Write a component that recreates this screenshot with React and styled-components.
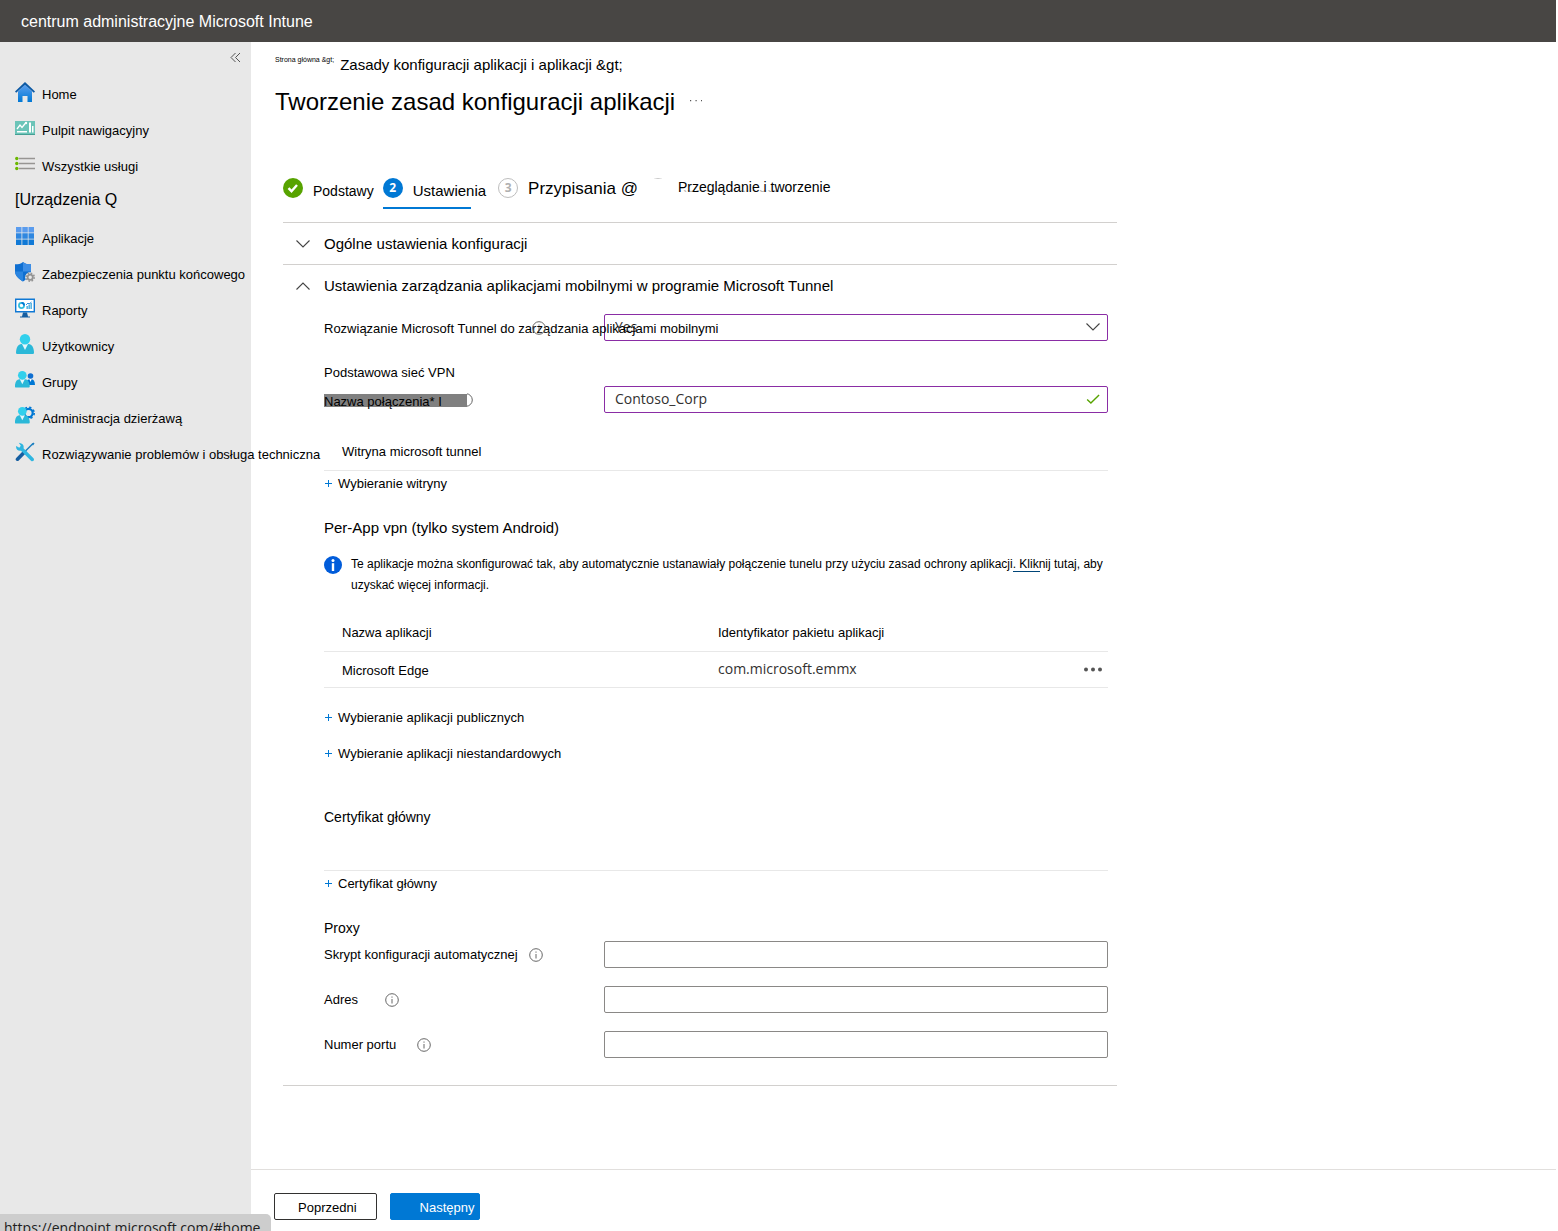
import styled, { createGlobalStyle } from 'styled-components';
import { useState } from 'react';

const GlobalStyle = createGlobalStyle`
  *,
  *::before,
  *::after {
    box-sizing: border-box;
  }

  body {
    margin: 0;
    background: #fff;
    color: #000;
    font-family: 'Liberation Sans', Arial, sans-serif;
    font-size: 13px;
    line-height: 18px;
  }

  button,
  input,
  select {
    font: inherit;
    color: inherit;
  }

  svg {
    flex: none;
  }
`;

const Page = styled.div`
  display: flex;
  flex-direction: column;
  min-height: 100vh;
`;

const TopBar = styled.header`
  height: 42px;
  margin-right: 2px;
  padding: 0 21px;
  background: #484644;
  color: #fff;
  font-size: 16px;
  line-height: 43px;
`;

const Body = styled.div`
  display: flex;
  flex: 1;
`;

const Sidebar = styled.nav`
  position: relative;
  z-index: 1;
  flex: 0 0 251px;
  min-width: 0;
  background: #e8e8e8;
`;

const CollapseRow = styled.div`
  display: flex;
  justify-content: flex-end;
  height: 34px;
  padding: 10px 10px 0;
`;

const IconButton = styled.button`
  display: flex;
  padding: 0;
  border: 0;
  background: none;
  cursor: pointer;
`;

const NavList = styled.ul`
  margin: 0;
  padding: 0;
  list-style: none;
`;

const NavLink = styled.a`
  display: flex;
  align-items: center;
  gap: 7px;
  height: 36px;
  padding: 2px 0 0 15px;
  color: #000;
  text-decoration: none;
  white-space: nowrap;

  svg {
    margin-bottom: 6px;
  }
`;

const NavHeading = styled(NavLink)`
  padding-top: 0;
  padding-bottom: 5px;
  font-size: 16px;
`;

const Main = styled.main`
  display: flex;
  flex: 1;
  flex-direction: column;
  min-width: 0;
`;

const Heading = styled.div`
  padding: 12px 24px 0;
`;

const Breadcrumb = styled.div`
  display: flex;
  gap: 6px;
  font-size: 15px;
  line-height: 22px;

  a {
    color: #000;
    text-decoration: none;
  }
`;

const SmallCrumb = styled.a`
  font-size: 7px;
  line-height: 12px;
`;

const TitleRow = styled.div`
  display: flex;
  align-items: center;
  gap: 15px;
  margin-top: 12px;

  svg {
    margin-bottom: 4px;
  }
`;

const Title = styled.h1`
  margin: 0;
  font-size: 24px;
  font-weight: 400;
  line-height: 28px;
`;

const Content = styled.div`
  flex: 1;
  width: 100%;
  max-width: 866px;
  padding: 60px 0 83px 32px;
`;

const Steps = styled.ol`
  display: flex;
  height: 46px;
  margin: 0;
  padding: 0;
  list-style: none;
`;

const Step = styled.li`
  position: relative;
  display: flex;
  gap: 10px;
  height: 33px;
  margin-right: ${(props) => props.$after || 0}px;
  font-size: ${(props) => props.$size || 14}px;
  line-height: ${(props) => props.$line || 30}px;
  white-space: nowrap;
`;

const ActiveLine = styled.span`
  position: absolute;
  bottom: 0;
  left: 0;
  width: 88px;
  height: 2px;
  background: #0078d4;
`;

const StepMark = styled.span`
  display: flex;
  flex: none;
  align-items: center;
  justify-content: center;
  width: 20px;
  height: 20px;
  margin-top: 2px;
  border: ${(props) => (props.$outlined ? '1px solid #bdbdbd' : 0)};
  border-radius: 50%;
  background: ${(props) => props.$fill || 'transparent'};
  color: ${(props) => (props.$outlined ? '#b0b0b0' : '#fff')};
  font: 700 12px/18px 'Open Sans', sans-serif;
`;

const PendingMark = styled.span`
  width: 20px;
  height: 1px;
  margin-top: 2px;
  overflow: hidden;

  &::before {
    content: '';
    display: block;
    height: 20px;
    border: 1px solid #c8c8c8;
    border-radius: 50%;
  }
`;

/* only the lower edge of the faded caption shows under the label */
const FadedCaption = styled.span`
  position: relative;

  &::before {
    content: 'Review + create';
    position: absolute;
    top: 0;
    left: 0;
    color: #b8b8b8;
    font-family: 'Open Sans', sans-serif;
    clip-path: inset(14px 0 0 0);
  }
`;

const StepLabel = styled.span`
  position: relative;
`;

const AccordionHead = styled.button`
  display: flex;
  align-items: center;
  gap: 14px;
  width: 100%;
  height: 42px;
  padding: 1px 13px 0;
  border: 0;
  border-top: 1px solid #d2d0ce;
  background: none;
  font-size: 15px;
  text-align: left;
  cursor: pointer;
`;

const Panel = styled.div`
  padding: 8px 9px 27px 41px;
  border-bottom: 1px solid #d2d0ce;
`;

const FieldRow = styled.div`
  display: grid;
  grid-template-columns: 280px 1fr;
  align-items: center;
  height: 27px;
  margin-bottom: ${(props) => props.$after || 0}px;
`;

const LabelCell = styled.div`
  position: relative;
  z-index: 1;
  display: flex;
  align-items: center;
  gap: ${(props) => props.$gap || 0}px;
  padding-top: 1px;
  white-space: nowrap;
  pointer-events: none;
`;

const Label = styled.label`
  padding-top: 1px;
`;

const HintOver = styled.span`
  position: absolute;
  left: 208px;
  display: flex;
`;

const HalfHint = styled.span`
  display: flex;
  justify-content: flex-end;
  width: 6px;
  overflow: hidden;
`;

const Marked = styled.label`
  width: 143px;
  height: 13px;
  margin-top: 1px;
  background: #808080;
  line-height: 16px;
`;

const Control = styled.div`
  position: relative;
  display: flex;

  svg {
    position: absolute;
    top: 6px;
    right: 8px;
    pointer-events: none;
  }
`;

const controlStyle = `
  width: 100%;
  height: 27px;
  padding: 0 10px 2px;
  border-radius: 2px;
  background: #fff;
  color: #323130;
  font: 14px/20px 'Open Sans', sans-serif;
  outline: none;
`;

const Select = styled.select`
  ${controlStyle}
  appearance: none;
  border: 1px solid #8a2da5;
`;

const Input = styled.input`
  ${controlStyle}
  border: 1px solid ${(props) => (props.$changed ? '#8a2da5' : '#8a8886')};
`;

const SubHeading = styled.h2`
  margin: 0;
  font-size: ${(props) => props.$size || 14}px;
  font-weight: 400;
  line-height: 18px;
`;

const ListHead = styled.div`
  height: ${(props) => props.$height || 28}px;
  padding-left: 18px;
  border-bottom: 1px solid #e8e8e8;
`;

const AddButton = styled.button`
  display: flex;
  align-items: center;
  gap: 5px;
  height: ${(props) => props.$height || 26}px;
  padding: 0;
  border: 0;
  background: none;
  cursor: pointer;

  svg {
    margin-bottom: 1px;
  }
`;

const Section = styled.section`
  padding-top: ${(props) => props.$top}px;
`;

const InfoNote = styled.div`
  display: flex;
  gap: 9px;
  margin-top: 17px;
  font-size: 12px;
  line-height: 21px;

  svg {
    margin-top: 2px;
  }

  p {
    margin: 0;
  }
`;

const NoteLink = styled.a`
  position: relative;
  color: #000;
  text-decoration: none;

  &::after {
    content: '';
    position: absolute;
    bottom: -1px;
    left: -6px;
    width: 27px;
    height: 1px;
    background: #004578;
  }
`;

const AppsTable = styled.table`
  width: 100%;
  margin-top: 19px;
  border-collapse: collapse;
  table-layout: fixed;

  th,
  td {
    height: 36px;
    padding: 0;
    border-bottom: 1px solid #e8e8e8;
    font-weight: 400;
    text-align: left;
  }

  th:first-child,
  td:first-child {
    width: 394px;
    padding-left: 18px;
  }

  td:first-child {
    padding-top: 3px;
  }

  th:last-child,
  td:last-child {
    width: 25px;
  }
`;

const PackageId = styled.td`
  color: #323130;
  font: 14px/20px 'Open Sans', sans-serif;
`;

const Footer = styled.footer`
  display: flex;
  gap: 13px;
  padding: 23px 23px 11px;
  margin-right: 2px;
  border-top: 1px solid #e1dfdd;
`;

const Button = styled.button`
  height: 27px;
  padding: ${(props) => (props.$primary ? '2px 5px 0 29px' : '2px 19px 0 23px')};
  border: 1px solid ${(props) => (props.$primary ? '#0078d4' : '#323130')};
  border-radius: 2px;
  background: ${(props) => (props.$primary ? '#0078d4' : '#fff')};
  color: ${(props) => (props.$primary ? '#fff' : '#000')};
  cursor: pointer;
`;

const StatusBubble = styled.div`
  position: fixed;
  z-index: 2;
  bottom: 0;
  left: 0;
  height: 17px;
  padding: 0 11px 0 4px;
  overflow: hidden;
  border-radius: 0 5px 0 0;
  background: #cdcdcd;
  color: #202020;
  font: 14px/28px 'Open Sans', sans-serif;
`;

const HomeIcon = () => (
  <svg width="20" height="20" viewBox="0 0 20 20" aria-hidden="true">
    <defs>
      <linearGradient id="home" x1="0" y1="0" x2="0" y2="1">
        <stop offset="0" stopColor="#5ea0ef" />
        <stop offset="1" stopColor="#0078d4" />
      </linearGradient>
    </defs>
    <path d="M3 9.5 10 2.5l7 7V20h-4.5v-6h-5v6H3z" fill="url(#home)" />
    <path d="M10 0 0 9.4l1.2 1.3L10 2.7l8.8 8L20 9.4z" fill="#0c59a4" />
  </svg>
);

const DashboardIcon = () => (
  <svg width="20" height="20" viewBox="0 0 20 20" aria-hidden="true">
    <path d="M0 3h20v14H0z" fill="#6bc4b8" />
    <path d="M0 16h20v1H0z" fill="#459f94" />
    <path d="M2 13h10v1.500H2zM14 4.500h2v10h-2zM17 8h1.500v6.500H17z" fill="#fff" />
    <path d="m2 11 3-4 2 2.500 4-5" fill="none" stroke="#fff" strokeWidth="1.300" />
    <circle cx="11" cy="5" r="1.200" fill="#fff" />
  </svg>
);

const ListIcon = () => (
  <svg width="20" height="20" viewBox="0 0 20 20" aria-hidden="true">
    <path d="M4 4.500h16M4 9.500h16M4 14.500h16" stroke="#979593" strokeWidth="1.600" />
    <g fill="#6bb700">
      <circle cx="1.800" cy="4.500" r="1.700" />
      <circle cx="1.800" cy="9.500" r="1.700" />
      <circle cx="1.800" cy="14.500" r="1.700" />
    </g>
  </svg>
);

const AppsIcon = () => (
  <svg width="20" height="20" viewBox="0 0 20 20" aria-hidden="true">
    <path d="M1 1h5.500v5.500H1zM7.300 1h5.500v5.500H7.300zM13.500 1H19v5.500h-5.500z" fill="#5a9cee" />
    <path d="M1 7.300h5.500v5.500H1zM7.300 7.300h5.500v5.500H7.300zM13.500 7.300H19v5.500h-5.500z" fill="#2f87e0" />
    <path d="M1 13.500h5.500V19H1zM7.300 13.500h5.500V19H7.300zM13.500 13.500H19V19h-5.500z" fill="#1079d6" />
  </svg>
);

const ShieldIcon = () => (
  <svg width="20" height="20" viewBox="0 0 20 20" aria-hidden="true">
    <path d="M8 0c2.500 2 4.500 2.300 8 2.300v7c0 5-5 8.200-8 10.200-3-2-8-5.200-8-10.200v-7C3.500 2.300 5.500 2 8 0z" fill="#0f6fd1" />
    <path d="M8 0c2.500 2 4.500 2.300 8 2.300V9.500H8z" fill="#3d8ee6" />
    <path d="M0 9.500h8v10C5 17.500 0 14.300 0 9.500z" fill="#2b85e0" />
    <circle cx="15.200" cy="15.200" r="5" fill="#e8e8e8" />
    <circle cx="15.200" cy="15.200" r="2.600" fill="none" stroke="#949494" strokeWidth="1.800" />
    <circle cx="15.200" cy="15.200" r="4" fill="none" stroke="#949494" strokeWidth="1.600" strokeDasharray="1.600 1.540" />
  </svg>
);

const ReportsIcon = () => (
  <svg width="20" height="20" viewBox="0 0 20 20" aria-hidden="true">
    <path d="M.7 1.200h18.600v12.600H.7z" fill="#fff" stroke="#0f78d4" strokeWidth="1.400" />
    <path d="M8 14.500h4l1 4h2v1H5v-1h2z" fill="#155ea1" />
    <circle cx="6.500" cy="7.500" r="2.600" fill="none" stroke="#32bedd" strokeWidth="1.700" />
    <path d="M6.500 4.900a2.600 2.600 0 0 1 2.600 2.600" fill="none" stroke="#0078d4" strokeWidth="1.700" />
    <path d="M11.500 8h1.300v3h-1.300zM13.500 6.500h1.300V11h-1.300zM15.500 5h1.300v6h-1.300z" fill="#32a5dd" />
    <path d="m11 7 2-2 1 1 2.500-2" fill="none" stroke="#0078d4" strokeWidth=".8" />
  </svg>
);

const PersonShape = ({ fill = '#2bb8d8' }) => (
  <>
    <path d="M1 18.500C1.200 14 3 10 6.500 10h7c3.500 0 5.300 4 5.500 8.500 0 1-.7 1.500-1.500 1.500h-15C1.700 20 1 19.500 1 18.500z" fill={fill} />
    <path d="M7 10h6l-3 6z" fill="#e4f7fb" />
    <circle cx="10" cy="5.200" r="5.200" fill="#32d0ec" />
  </>
);

const UserIcon = () => (
  <svg width="20" height="20" viewBox="0 0 20 20" aria-hidden="true">
    <PersonShape />
  </svg>
);

const GroupIcon = () => (
  <svg width="20" height="20" viewBox="0 0 20 20" aria-hidden="true">
    <circle cx="15.500" cy="6" r="2.800" fill="#0f6fd1" />
    <path d="M11 15c0-4 1.500-6 4.500-6s4.500 2 4.500 6z" fill="#0078d4" />
    <path d="m14.300 9 1.200 3 1.200-3z" fill="#fff" />
    <g transform="translate(-1 1) scale(.83)">
      <PersonShape />
    </g>
  </svg>
);

const TenantIcon = () => (
  <svg width="20" height="20" viewBox="0 0 20 20" aria-hidden="true">
    <circle cx="13.500" cy="7" r="4.200" fill="none" stroke="#0078d4" strokeWidth="2.200" />
    <circle cx="13.500" cy="7" r="5.700" fill="none" stroke="#0078d4" strokeWidth="1.600" strokeDasharray="2.240 2.240" />
    <g transform="translate(-1 1) scale(.83)">
      <PersonShape />
    </g>
  </svg>
);

const ToolsIcon = () => (
  <svg width="20" height="20" viewBox="0 0 20 20" aria-hidden="true">
    <path d="M18 1.500 10.500 9" stroke="#1b7fc0" strokeWidth="1.500" />
    <path d="m18.500.5 1 1-1.500 2-1.300-1.200z" fill="#1b7fc0" />
    <path d="m9.500 10-7 7.200" stroke="#155ea1" strokeWidth="3.600" strokeLinecap="round" />
    <path d="M5.500 1.200 3.800.8l2 3-1.500 2L1.200 4C.5 7 3 9.500 6 8.700l10 10c1.800 1.500 4-.7 2.500-2.500l-10-10C9.200 3.500 7.800 1.500 5.500 1.200z" fill="#2fb6e0" />
  </svg>
);

const CollapseIcon = () => (
  <svg width="11" height="11" viewBox="0 0 11 11" fill="none" stroke="#555" aria-hidden="true">
    <path d="M5.500 1 1 5.500 5.500 10M10 1 5.500 5.500 10 10" />
  </svg>
);

const ChevronIcon = ({ up }) => (
  <svg width="14" height="14" viewBox="0 0 14 14" fill="none" stroke="#444" strokeWidth="1.100" aria-hidden="true">
    <path d={up ? 'M.5 10.500 7 4l6.500 6.500' : 'M.5 3.500 7 10l6.500-6.500'} />
  </svg>
);

const CheckIcon = ({ size = 12, color = '#fff', thick = 2.4 }) => (
  <svg width={size} height={size} viewBox="0 0 12 12" fill="none" stroke={color} strokeWidth={thick} aria-hidden="true">
    <path d={thick > 2 ? 'm1.500 6.200 3 3 5.500-6.200' : 'm1 6.500 3.200 3 7-7'} />
  </svg>
);

const HintIcon = () => (
  <svg width="14" height="14" viewBox="0 0 14 14" fill="none" stroke="#666" aria-hidden="true">
    <circle cx="7" cy="7" r="6.300" />
    <path d="M7 6v4.500M7 3.500v1.200" />
  </svg>
);

const InfoIcon = () => (
  <svg width="18" height="18" viewBox="0 0 18 18" aria-hidden="true">
    <circle cx="9" cy="9" r="9" fill="#015cda" />
    <path d="M7.800 7.200h2.400V15H7.800z" fill="#fff" />
    <circle cx="9" cy="4.500" r="1.500" fill="#fff" />
  </svg>
);

const PlusIcon = () => (
  <svg width="9" height="9" viewBox="0 0 9 9" stroke="#0078d4" aria-hidden="true">
    <path d="M4.500 1v7M1 4.500h7" />
  </svg>
);

const DotsIcon = ({ small }) => (
  <svg width={small ? 12 : 20} height="5" viewBox={small ? '0 0 12 5' : '0 0 20 5'} fill="#555" aria-hidden="true">
    {small ? (
      <path d="M0 2h1.200v1.200H0zM5.500 2h1.200v1.200H5.500zM11 2h1v1.200h-1z" />
    ) : (
      <>
        <circle cx="3" cy="2.500" r="2" />
        <circle cx="10" cy="2.500" r="2" />
        <circle cx="17" cy="2.500" r="2" />
      </>
    )}
  </svg>
);

const mainLinks = [
  { name: 'Home', icon: HomeIcon },
  { name: 'Pulpit nawigacyjny', icon: DashboardIcon },
  { name: 'Wszystkie usługi', icon: ListIcon },
];

const deviceLinks = [
  { name: 'Aplikacje', icon: AppsIcon },
  { name: 'Zabezpieczenia punktu końcowego', icon: ShieldIcon },
  { name: 'Raporty', icon: ReportsIcon },
  { name: 'Użytkownicy', icon: UserIcon },
  { name: 'Grupy', icon: GroupIcon },
  { name: 'Administracja dzierżawą', icon: TenantIcon },
  { name: 'Rozwiązywanie problemów i obsługa techniczna', icon: ToolsIcon },
];

const proxyFields = [
  { id: 'script', label: 'Skrypt konfiguracji automatycznej', gap: 11, after: 18 },
  { id: 'address', label: 'Adres', gap: 27, after: 18 },
  { id: 'port', label: 'Numer portu', gap: 21, after: 0 },
];

const NavItem = ({ item }) => {
  const Icon = item.icon;
  return (
    <li>
      <NavLink href="#home">
        <Icon />
        {item.name}
      </NavLink>
    </li>
  );
};

const Add = ({ children, height }) => (
  <AddButton type="button" $height={height}>
    <PlusIcon />
    {children}
  </AddButton>
);

const App = () => {
  const [connection, setConnection] = useState('Contoso_Corp');

  return (
    <Page>
      <GlobalStyle />
      <TopBar>centrum administracyjne Microsoft Intune</TopBar>
      <Body>
        <Sidebar>
          <CollapseRow>
            <IconButton type="button" aria-label="Zwiń menu">
              <CollapseIcon />
            </IconButton>
          </CollapseRow>
          <NavList>
            {mainLinks.map((item) => (
              <NavItem key={item.name} item={item} />
            ))}
            <li>
              <NavHeading href="#home">[Urządzenia Q</NavHeading>
            </li>
            {deviceLinks.map((item) => (
              <NavItem key={item.name} item={item} />
            ))}
          </NavList>
        </Sidebar>
        <Main>
          <Heading>
            <Breadcrumb>
              <SmallCrumb href="#home">Strona główna &amp;gt;</SmallCrumb>
              <a href="#apps">Zasady konfiguracji aplikacji i aplikacji &amp;gt;</a>
            </Breadcrumb>
            <TitleRow>
              <Title>Tworzenie zasad konfiguracji aplikacji</Title>
              <IconButton type="button" aria-label="Więcej">
                <DotsIcon small />
              </IconButton>
            </TitleRow>
          </Heading>
          <Content>
            <Steps>
              <Step $after={9}>
                <StepMark $fill="#57a300">
                  <CheckIcon />
                </StepMark>
                Podstawy
              </Step>
              <Step $after={12} $size={15}>
                <StepMark $fill="#0078d4">2</StepMark>
                Ustawienia
                <ActiveLine />
              </Step>
              <Step $after={10} $size={17} $line={26}>
                <StepMark $outlined>3</StepMark>
                Przypisania @
              </Step>
              <Step $size={14} $line={22}>
                <PendingMark />
                <FadedCaption>
                  <StepLabel>Przeglądanie i tworzenie</StepLabel>
                </FadedCaption>
              </Step>
            </Steps>
            <AccordionHead type="button" aria-expanded="false">
              <ChevronIcon />
              Ogólne ustawienia konfiguracji
            </AccordionHead>
            <AccordionHead type="button" aria-expanded="true">
              <ChevronIcon up />
              Ustawienia zarządzania aplikacjami mobilnymi w programie Microsoft Tunnel
            </AccordionHead>
            <Panel>
              <FieldRow $after={23}>
                <LabelCell>
                  <HintOver>
                    <HintIcon />
                  </HintOver>
                  <Label htmlFor="tunnel">Rozwiązanie Microsoft Tunnel do zarządzania aplikacjami mobilnymi</Label>
                </LabelCell>
                <Control>
                  <Select id="tunnel" defaultValue="Yes">
                    <option>Yes</option>
                    <option>No</option>
                  </Select>
                  <ChevronIcon />
                </Control>
              </FieldRow>
              <SubHeading $size={13}>Podstawowa sieć VPN</SubHeading>
              <Section $top={4}>
                <FieldRow $after={30}>
                  <LabelCell>
                    <Marked htmlFor="connection">Nazwa połączenia* I</Marked>
                    <HalfHint>
                      <HintIcon />
                    </HalfHint>
                  </LabelCell>
                  <Control>
                    <Input
                      id="connection"
                      $changed
                      value={connection}
                      onChange={(event) => setConnection(event.target.value)}
                    />
                    <CheckIcon size={14} color="#57a300" thick={1.2} />
                  </Control>
                </FieldRow>
              </Section>
              <ListHead>Witryna microsoft tunnel</ListHead>
              <Add>Wybieranie witryny</Add>
              <Section $top={22}>
                <SubHeading $size={15}>Per-App vpn (tylko system Android)</SubHeading>
                <InfoNote>
                  <InfoIcon />
                  <p>
                    Te aplikacje można skonfigurować tak, aby automatycznie ustanawiały połączenie tunelu przy użyciu
                    zasad ochrony aplikacji. <NoteLink href="#more">Kliknij tutaj</NoteLink>, aby uzyskać więcej
                    informacji.
                  </p>
                </InfoNote>
                <AppsTable>
                  <thead>
                    <tr>
                      <th>Nazwa aplikacji</th>
                      <th>Identyfikator pakietu aplikacji</th>
                      <th aria-label="Akcje" />
                    </tr>
                  </thead>
                  <tbody>
                    <tr>
                      <td>Microsoft Edge</td>
                      <PackageId>com.microsoft.emmx</PackageId>
                      <td>
                        <IconButton type="button" aria-label="Więcej">
                          <DotsIcon />
                        </IconButton>
                      </td>
                    </tr>
                  </tbody>
                </AppsTable>
              </Section>
              <Section $top={12}>
                <Add height={36}>Wybieranie aplikacji publicznych</Add>
                <Add height={36}>Wybieranie aplikacji niestandardowych</Add>
              </Section>
              <Section $top={36}>
                <SubHeading>Certyfikat główny</SubHeading>
                <ListHead $height={45} />
                <Add>Certyfikat główny</Add>
              </Section>
              <Section $top={22}>
                <SubHeading>Proxy</SubHeading>
                <Section $top={4}>
                  {proxyFields.map((field) => (
                    <FieldRow key={field.id} $after={field.after}>
                      <LabelCell $gap={field.gap}>
                        <Label htmlFor={field.id}>{field.label}</Label>
                        <HintIcon />
                      </LabelCell>
                      <Input id={field.id} />
                    </FieldRow>
                  ))}
                </Section>
              </Section>
            </Panel>
          </Content>
          <Footer>
            <Button type="button">Poprzedni</Button>
            <Button type="button" $primary>
              Następny
            </Button>
          </Footer>
        </Main>
      </Body>
      <StatusBubble>https://endpoint.microsoft.com/#home</StatusBubble>
    </Page>
  );
};

export default App;
